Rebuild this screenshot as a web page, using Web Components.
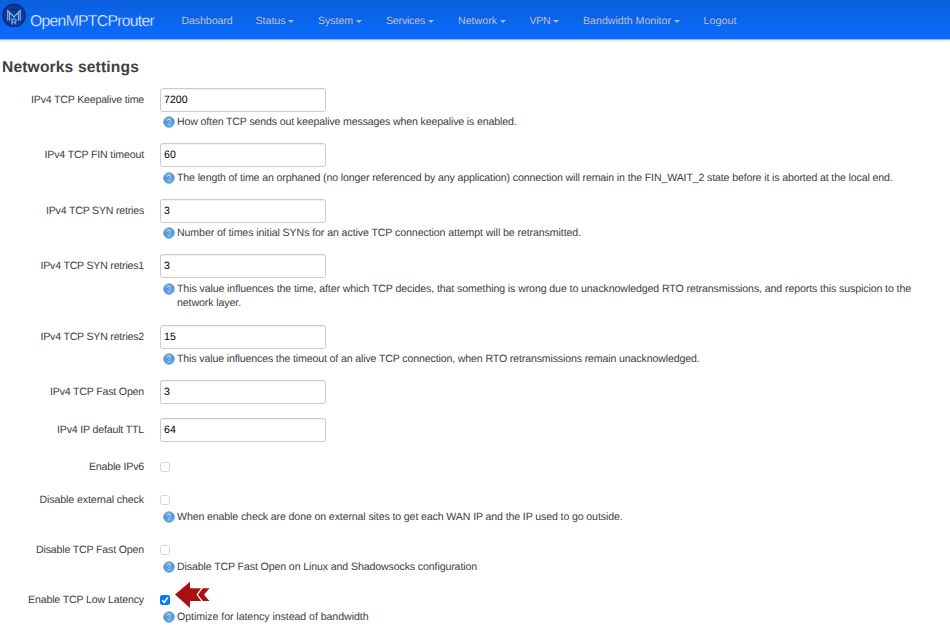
<!DOCTYPE html>
<html lang="en"><head><meta charset="utf-8"><title>OpenMPTCProuter</title>
<style>
html,body{margin:0;height:639px;overflow:hidden;background:#fff}
body{font:10.6px/14px "Liberation Sans",Arial,sans-serif;color:#404040;text-rendering:geometricPrecision}
</style></head><body>
<router-page></router-page>
<script>
// Text run whose tracking is tuned to fill a given width.
class FitText extends HTMLElement{
  connectedCallback(){
    const r=this.attachShadow({mode:'open'});
    r.innerHTML='<style>:host{display:inline-block;white-space:nowrap}</style><span><slot></slot></span>';
    const s=r.querySelector('span'),w=+this.getAttribute('w'),n=this.textContent.length;
    s.style.letterSpacing=((w-s.getBoundingClientRect().width)/n)+'px';
  }
}
customElements.define('fit-text',FitText);

class NavItem extends HTMLElement{
  connectedCallback(){
    this.attachShadow({mode:'open'}).innerHTML=`<style>
    :host{display:flex;align-items:center;color:#bfc8de;text-shadow:0 -1px 0 rgba(0,0,0,.25)}
    i{margin:0 1.5px 0 2.5px;border:3px solid transparent;border-top-color:#a9bde6;border-bottom:0}
    </style><fit-text w="${this.getAttribute('w')}">${this.getAttribute('label')}</fit-text>${this.hasAttribute('menu')?'<i></i>':''}`;
  }
}
customElements.define('nav-item',NavItem);

class TopBar extends HTMLElement{
  connectedCallback(){
    const items=[['Dashboard',51,0,23],['Status',30,1,22.5],['System',35,1,23],['Services',39,1,23],['Network',39,1,22.5],['VPN',21,1,22.5],['Bandwidth Monitor',88,1,22.5],['Logout',33,0,0]];
    this.attachShadow({mode:'open'}).innerHTML=`<style>
    :host{display:flex;height:39px;background:linear-gradient(#0b5fdc,#0a6cff);border-bottom:1px solid #8fb5fa;box-shadow:0 1px 2px rgba(0,0,0,.12)}
    .logo{width:24px;height:24px;margin:3px 0 0 2px}
    .brand{width:155.5px;padding:12px 0 0 4px;box-sizing:border-box;font-size:15.8px;line-height:20px;color:#f4f9ff;-webkit-text-stroke:.3px #0a68f2}
    nav{display:flex;padding-top:14px;height:14px}
    </style>
    <svg class="logo" viewBox="0 0 24 24"><circle cx="12" cy="12.5" r="11" fill="#0a3e9a" stroke="#063184" stroke-width="1.8"/><g fill="none" stroke="#9bbcec" stroke-width="1.1"><path d="M5.8 17.5V7.5L12 14l6.2-6.5v10M7.6 17.5V10M16.4 17.5V10"/><path d="M10 21.5v-5.5h2.2q2 0 2 1.5t-2 1.5H10m2.2 0 2 2.5"/><path d="M8.5 6.5h7" stroke="#052661"/></g></svg>
    <div class="brand"><fit-text w="124">OpenMPTCProuter</fit-text></div>
    <nav>${items.map(i=>`<nav-item style="margin-right:${i[3]}px" label="${i[0]}" w="${i[1]}" ${i[2]?'menu':''}></nav-item>`).join('')}</nav>`;
  }
}
customElements.define('top-bar',TopBar);

class HelpIcon extends HTMLElement{
  connectedCallback(){
    this.attachShadow({mode:'open'}).innerHTML=`<style>:host{display:block;width:12px;height:12px}svg{display:block}</style>
    <svg width="12" height="12" viewBox="0 0 12 12"><defs><linearGradient id="g" x2=".3" y2="1"><stop stop-color="#a4c4e5"/><stop offset=".5" stop-color="#5394d5"/><stop offset="1" stop-color="#65b5ef"/></linearGradient></defs><circle cx="6" cy="6" r="5.3" fill="url(#g)" stroke="#507fae" stroke-width=".7"/><path d="M4.4 4.6Q4.5 3.2 6 3.2t1.6 1.3Q7.6 5.3 6.7 5.8 6 6.2 6 7M6 8v1" fill="none" stroke="#d4e8fc" stroke-width=".9"/></svg>`;
  }
}
customElements.define('help-icon',HelpIcon);

class FormRow extends HTMLElement{
  connectedCallback(){
    const a=n=>this.getAttribute(n),box=a('type')==='check',on=this.hasAttribute('checked');
    const field=box?`<span class="check ${on?'on':''}">${on?'<svg width="10" height="10" viewBox="0 0 10 10"><path d="M2.2 5.3 4.2 7.5 7.8 2.4" fill="none" stroke="#fff" stroke-width="1.5"/></svg>':''}</span>`
      :`<div class="input">${a('value')}</div>`;
    this.attachShadow({mode:'open'}).innerHTML=`<style>
    :host{display:grid;grid-template-columns:144px 1fr;column-gap:16px;align-content:start;box-sizing:border-box}
    .label{text-align:right;line-height:${box?13:24}px;height:${box?12:24}px}
    .field{display:flex;height:${box?12:24}px;align-items:center}
    .input{box-sizing:border-box;width:166px;height:24px;border:1px solid #cbcbcb;border-radius:2.5px;padding-left:3px;line-height:22px;color:#000;box-shadow:inset 0 1px 1px rgba(0,0,0,.06)}
    .check{box-sizing:border-box;width:10px;height:10px;border:1px solid #d6d6d6;border-radius:2.5px;background:#fff}
    .on{background:#0878f8;border:0}.on svg{display:block}
    .arrow{margin:-10px 0 0 5px}
    .help{grid-column:2;display:flex;gap:2.5px;padding:${box?4.5:3.4}px 0 0 2.5px;line-height:14.5px}
    help-icon{margin-top:1px}
    </style><div class="label"><fit-text w="${a('lw')}">${a('label')}</fit-text></div><div class="field">${field}${on?'<svg class="arrow" width="36" height="28" viewBox="0 0 36 28"><path d="M0 13.5 15 .8v6.4h19.5L29 13.7l5.5 6.3H15v7Z" fill="#a81014"/><path d="m27.2 6.8-5 6.8 5 6.8" fill="none" stroke="#fff" stroke-width="1.3"/></svg>':''}</div>
    ${a('help')?`<div class="help"><help-icon></help-icon><div>${a('help').split('|').map((t,i)=>`<fit-text w="${a('hw').split('|')[i]}">${t}</fit-text>`).join('<br>')}</div></div>`:''}`;
  }
}
customElements.define('form-row',FormRow);

class RouterPage extends HTMLElement{
  connectedCallback(){
    const rows=[
    [55.5,'IPv4 TCP Keepalive time',113,'7200','How often TCP sends out keepalive messages when keepalive is enabled.','339.5'],
    [55.5,'IPv4 TCP FIN timeout',99.5,'60','The length of time an orphaned (no longer referenced by any application) connection will remain in the FIN_WAIT_2 state before it is aborted at the local end.','715.5'],
    [55.5,'IPv4 TCP SYN retries',98,'3','Number of times initial SYNs for an active TCP connection attempt will be retransmitted.','404'],
    [70.5,'IPv4 TCP SYN retries1',103.5,'3','This value influences the time, after which TCP decides, that something is wrong due to unacknowledged RTO retransmissions, and reports this suspicion to the|network layer.','734|64'],
    [55.5,'IPv4 TCP SYN retries2',103.5,'15','This value influences the timeout of an alive TCP connection, when RTO retransmissions remain unacknowledged.','522.5'],
    [37.5,'IPv4 TCP Fast Open',94,'3'],
    [43,'IPv4 IP default TTL',87,'64'],
    [33,'Enable IPv6',55,null],
    [50,'Disable external check',104.5,null,'When enable check are done on external sites to get each WAN IP and the IP used to go outside.','445.5'],
    [50,'Disable TCP Fast Open',108,null,'Disable TCP Fast Open on Linux and Shadowsocks configuration','300'],
    [39,'Enable TCP Low Latency',116,null,'Optimize for latency instead of bandwidth','191.5',1]];
    this.attachShadow({mode:'open'}).innerHTML=`<style>:host{display:block}h1{margin:0;padding:18px 0 0 2px;height:29.8px;font-size:15.6px;line-height:20px}</style>
    <top-bar></top-bar><h1><fit-text w="137">Networks settings</fit-text></h1>
    ${rows.map(r=>`<form-row style="height:${r[0]}px" label="${r[1]}" lw="${r[2]}" ${r[3]===null?'type="check"':`value="${r[3]}"`} ${r[4]?`help="${r[4]}" hw="${r[5]}"`:''} ${r[6]?'checked':''}></form-row>`).join('')}`;
  }
}
customElements.define('router-page',RouterPage);
</script></body></html>
